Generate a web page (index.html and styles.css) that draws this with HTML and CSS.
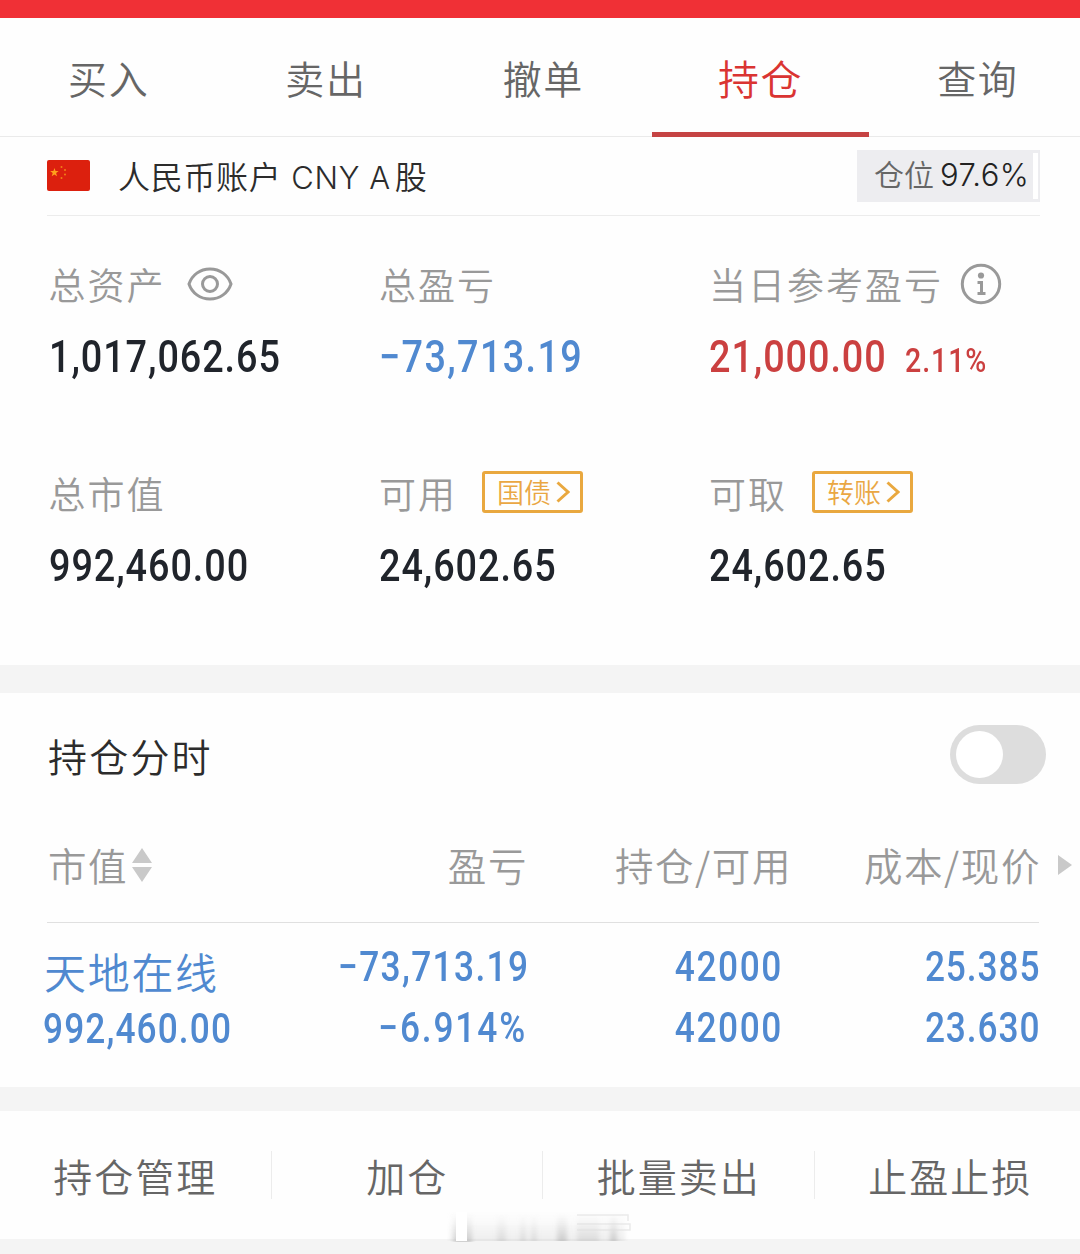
FILE: index.html
```html
<!DOCTYPE html>
<html lang="zh-CN">
<head>
<meta charset="utf-8">
<title>持仓</title>
<link rel="stylesheet" href="styles.css">
</head>
<body>
<div class="topbar"></div>
<nav class="tabs">
  <a class="tab">买入</a><a class="tab">卖出</a><a class="tab">撤单</a><a class="tab active">持仓</a><a class="tab">查询</a>
</nav>
<section class="account">
  <svg class="flag" viewBox="0 0 43 31"><rect width="43" height="31" rx="2" fill="#dc200e"/><path fill="#ffa01c" d="M7.5 8l1 3 3.2.1-2.6 2 .9 3.1-2.6-1.8-2.7 1.8 1-3.1-2.6-2 3.3-.1z"/><g fill="#f08018"><circle cx="14.5" cy="7" r="1"/><circle cx="18" cy="10" r="1"/><circle cx="18" cy="14.5" r="1"/><circle cx="14.5" cy="18" r="1"/></g></svg>
  <span class="account-name">人民币账户 <span class="latin">CNY A</span>股</span>
  <span class="position">仓位<span class="percent">97.6%</span></span>
</section>
<section class="summary">
  <div class="cell">
    <div class="label">总资产<svg class="eye" viewBox="0 0 46 34"><path d="M2 17C5 8 13 2 23 2s18 6 21 15c-3 9-11 15-21 15S5 26 2 17z"/><circle cx="23" cy="17" r="7.5"/></svg></div>
    <div class="value"><span class="num">1,017,062.65</span></div>
  </div>
  <div class="cell">
    <div class="label">总盈亏</div>
    <div class="value blue"><span class="num loss">−73,713.19</span></div>
  </div>
  <div class="cell">
    <div class="label">当日参考盈亏<svg class="info" viewBox="0 0 42 42"><circle class="ring" cx="21" cy="21" r="18.7"/><circle cx="21" cy="12.5" r="3.1"/><path d="M17.5 18H23v11h2.5v3h-8v-3H20v-8h-2.5z"/></svg></div>
    <div class="value red"><span class="num sum">21,000.00</span><span class="num rate">2.11%</span></div>
  </div>
  <div class="cell">
    <div class="label">总市值</div>
    <div class="value"><span class="num">992,460.00</span></div>
  </div>
  <div class="cell">
    <div class="label">可用<span class="tag">国债<svg viewBox="0 0 14 22"><path d="M1.5 1.5L12 11 1.5 20.5"/></svg></span></div>
    <div class="value"><span class="num">24,602.65</span></div>
  </div>
  <div class="cell">
    <div class="label">可取<span class="tag">转账<svg viewBox="0 0 14 22"><path d="M1.5 1.5L12 11 1.5 20.5"/></svg></span></div>
    <div class="value"><span class="num">24,602.65</span></div>
  </div>
</section>
<section class="holdings">
  <div class="intraday"><span>持仓分时</span><span class="toggle"></span></div>
  <div class="row head">
    <span class="first">市值<svg class="sort" viewBox="0 0 20 34"><path d="M10 0l10 15H0zM0 19h20L10 34z"/></svg></span>
    <span>盈亏</span><span>持仓/可用</span><span>成本/现价</span>
    <svg class="more" viewBox="0 0 14 20"><path d="M0 0l14 10L0 20z"/></svg>
  </div>
  <div class="divider"></div>
  <div class="row data top"><span class="name">天地在线</span><span class="num loss">−73,713.19</span><span class="num qty">42000</span><span class="num">25.385</span></div>
  <div class="row data"><span class="num first">992,460.00</span><span class="num loss ratio">−6.914%</span><span class="num qty">42000</span><span class="num">23.630</span></div>
</section>
<footer class="actions">
  <a>持仓管理</a><a>加仓</a><a>批量卖出</a><a>止盈止损</a>
  <svg class="smudge" viewBox="0 0 190 36">
    <defs>
      <linearGradient id="fade" x1="0" y1="0" x2="0" y2="1"><stop offset="0" stop-color="#ccc" stop-opacity="0"/><stop offset="1" stop-color="#aaa" stop-opacity=".5"/></linearGradient>
      <linearGradient id="haze" x1="0" y1="0" x2="0" y2="1"><stop offset="0" stop-color="#ddd" stop-opacity="0"/><stop offset="1" stop-color="#ccc" stop-opacity=".35"/></linearGradient>
      <filter id="soft"><feGaussianBlur stdDeviation="2 .3"/></filter>
    </defs>
    <path d="M3 0h175v29H3z" fill="url(#haze)" filter="url(#soft)"/>
    <g fill="url(#fade)" filter="url(#soft)"><path d="M7 1h18v29H7z"/><path d="M110 1h10v28h-10zM163 3h7v26h-7z"/><path opacity=".55" d="M50 1h9v28H50zM73 1h6v28h-6zM84 1h6v28h-6zM130 3h22v26h-22z"/></g>
    <path fill="#fff" d="M9 0h11v29H9z"/>
    <path d="M130 3h51v6M130 12h53v6h-53" fill="none" stroke="#ddd" stroke-width="1.5" opacity=".6"/>
  </svg>
</footer>
<div class="bottom"></div>
</body>
</html>
```
FILE: styles.css
```css
* { box-sizing: border-box; }
body {
  margin: 0;
  width: 1080px;
  height: 1254px;
  overflow: hidden;
  background: #fefefe;
  color: #2c2c2c;
  font-family: "Noto Sans CJK SC", sans-serif;
  font-weight: 350;
}
svg { display: block; flex: none; }
.topbar { height: 18px; background: #f03036; }

.tabs {
  display: grid;
  grid-template-columns: repeat(5, 217.3px);
  height: 119px;
  border-bottom: 1px solid #eaeaea;
}
.tab {
  height: 119px;
  font-size: 39px;
  letter-spacing: 1.6px;
  line-height: 119px;
  text-align: center;
  color: #666;
}
.tab.active {
  border-bottom: 5px solid #c54343;
  font-size: 41px;
  line-height: 118px;
  color: #da3432;
}

.account {
  display: flex;
  align-items: center;
  height: 79px;
  margin: 0 40px 0 47px;
  border-bottom: 1px solid #ececec;
}
.flag { width: 43px; height: 31px; margin-top: -1px; }
.account-name { margin: 0 0 0 28px; font-size: 32px; line-height: 40px; letter-spacing: .7px; }
.latin { font-family: Inter, sans-serif; font-size: 31px; font-weight: 350; margin: 0 4px 0 2px; letter-spacing: .6px; }
.position {
  display: flex;
  align-items: center;
  width: 183px;
  height: 52px;
  margin: 0 0 0 auto;
  padding: 0 0 6px 17px;
  border-right: 1px solid #ececef;
  background: linear-gradient(#fff, #fff) 176px 3px / 5px 46px no-repeat #ededf0;
  font-size: 30px;
  color: #666;
}
.percent { margin: 3px 0 0 6px; font-family: Inter, sans-serif; font-size: 31px; font-weight: 350; letter-spacing: .4px; color: #222; }

.summary {
  display: grid;
  grid-template-columns: 330.5px 330px 1fr;
  grid-auto-rows: 209px;
  height: 449px;
  padding: 38px 0 0 48.5px;
}
.label {
  display: flex;
  align-items: center;
  height: 60px;
  font-size: 37px;
  letter-spacing: 2px;
  color: #999;
}
.eye { width: 46px; height: 34px; margin: 0 0 0 21px; fill: none; stroke: #999; stroke-width: 3; }
.info { width: 42px; height: 42px; margin: 0 0 0 17px; fill: #999; }
.ring { fill: none; stroke: #999; stroke-width: 3; }
.tag {
  display: flex;
  align-items: center;
  width: 101px;
  height: 42px;
  margin: -3px 0 0 25px;
  padding: 0 0 1px 12px;
  border: 3px solid #e9a83f;
  border-radius: 3px;
  font-size: 27px;
  letter-spacing: 0;
  color: #eaa743;
}
.tag svg { width: 14px; height: 22px; margin: 1px 0 0 5px; fill: none; stroke: #e9a83f; stroke-width: 3; }
.value { display: flex; align-items: baseline; height: 86px; line-height: 86px; color: #20242b; }
.num {
  display: inline-block;
  font-family: Roboto, sans-serif;
  font-size: 45px;
  font-weight: 500;
  white-space: nowrap;
  transform: scaleX(.84);
  transform-origin: left center;
  letter-spacing: 1.1px;
}
.blue { color: #5089d0; }
.loss { letter-spacing: 1.6px; }
.red { color: #cb4040; }
.sum { width: 196px; }
.rate { font-size: 34px; }

.holdings { height: 422px; border-top: 28px solid #f4f4f4; }
.intraday {
  display: flex;
  align-items: center;
  justify-content: space-between;
  height: 123px;
  padding: 0 34px 0 48px;
  font-size: 39px;
  letter-spacing: 2.2px;
}
.toggle { width: 96px; height: 59px; padding: 6px; border-radius: 30px; background: #ddd; }
.toggle::before { content: ""; display: block; width: 47px; height: 47px; border-radius: 50%; background: #fff; }
.row {
  display: grid;
  grid-template-columns: 255px 225px 264px 249px 32px;
  padding-left: 48px;
  text-align: right;
}
.head { align-items: center; height: 106px; padding-bottom: 10px; font-size: 38.5px; letter-spacing: 1.6px; color: #999; }
.first { display: flex; align-items: center; }
.sort { width: 20px; height: 34px; margin: 1px 0 0 4px; fill: #c9c9c9; }
.more { width: 14px; height: 20px; margin: 1px 0 0 17px; fill: #c9c9c9; }
.divider { height: 1px; margin: 0 41px 0 47px; background: #e0e0e0; }
.data { height: 61px; padding-left: 44px; grid-template-columns: 258px 225px 256px 257.5px; line-height: 59px; color: #5089d0; }
.data .num { font-size: 42px; transform-origin: right center; }
.data .num.first { margin-left: -1px; letter-spacing: 1.3px; transform-origin: left center; }
.data .qty { letter-spacing: 1.9px; }
.data .ratio { letter-spacing: 2.2px; }
.top { height: 75px; padding-top: 14px; }
.name { text-align: left; font-size: 42px; letter-spacing: 1.7px; padding-top: 4px; }

.actions {
  position: relative;
  display: grid;
  grid-template-columns: repeat(4, 271.5px);
  height: 152px;
  border-top: 24px solid #f4f4f4;
  font-size: 39px;
  letter-spacing: 2px;
  color: #666;
}
.actions a { height: 48px; margin: 40px 0 0 -1px; border-left: 1px solid #ececec; line-height: 48px; text-align: center; }
.actions a:first-child { border: 0; }
.smudge { position: absolute; left: 447px; top: 101px; width: 190px; height: 36px; }
.bottom { height: 15px; background: #f4f4f4; }
```
